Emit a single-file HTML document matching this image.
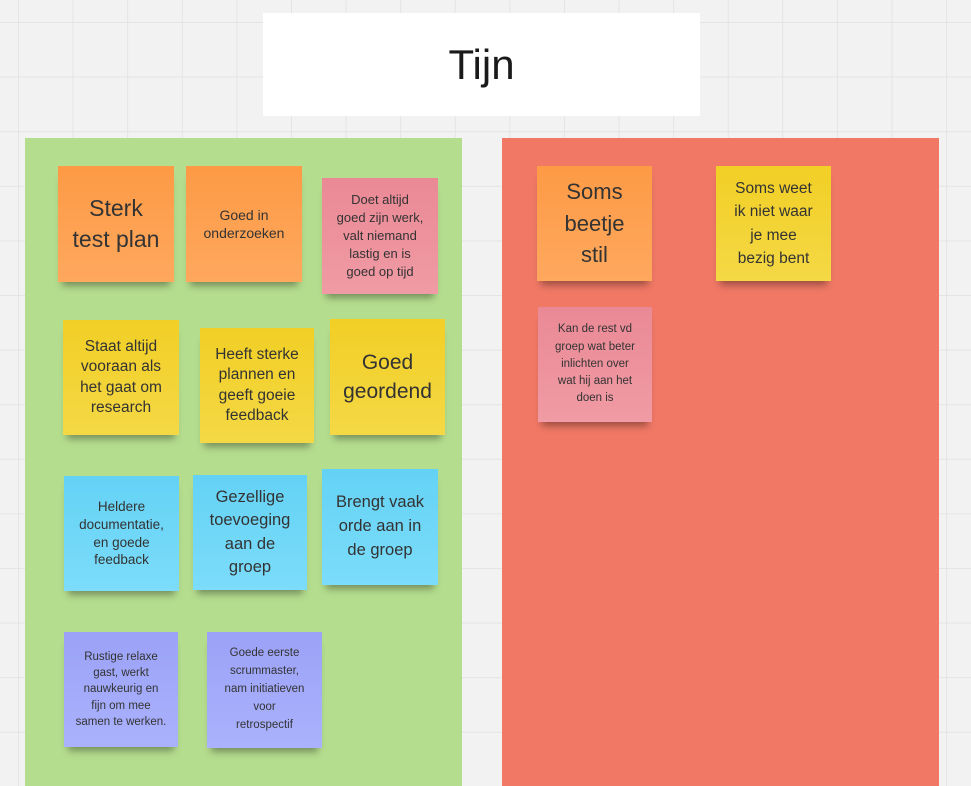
<!DOCTYPE html>
<html><head><meta charset="utf-8"><style>
html,body{margin:0;padding:0}
body{width:971px;height:786px;overflow:hidden;position:relative;background-color:#f2f2f2;
background-image:linear-gradient(to right,#e4e4e4 1px,transparent 1px),linear-gradient(to bottom,#e4e4e4 1px,transparent 1px);
background-size:54.6px 54.6px;background-position:18px 22px;font-family:"Liberation Sans",sans-serif}
.p{position:absolute}
.title{left:263px;top:13px;width:437px;height:103px;background:#fff;display:flex;align-items:center;justify-content:center;font-size:42px;color:#1a1a1a}
.g{left:25px;top:138px;width:437px;height:648px;background:#b5dd8e}
.r{left:502px;top:138px;width:437px;height:648px;background:#f07865}
.n{position:absolute;display:flex;align-items:center;justify-content:center;text-align:center;color:#333;box-shadow:0 8px 7px -4px rgba(0,0,0,.35);line-height:1.3;box-sizing:border-box;padding:4px}
.o{background:linear-gradient(#fd9a45,#fea85e)}
.pk{background:linear-gradient(#ea8995,#f09ba5)}
.y{background:linear-gradient(#f2cf25,#f4d845)}
.c{background:linear-gradient(#64d2f5,#7cdcfa)}
.v{background:linear-gradient(#9ba2f7,#aab2fd)}
</style></head><body>
<div class="p title">Tijn</div>
<div class="p g"></div>
<div class="p r"></div>

<div class="n o" style="left:58px;top:166px;width:116px;height:116px;font-size:23px;line-height:1.35">Sterk<br>test plan</div>
<div class="n o" style="left:186px;top:166px;width:116px;height:116px;font-size:14px">Goed in<br>onderzoeken</div>
<div class="n pk" style="left:322px;top:178px;width:116px;height:116px;font-size:13px;line-height:1.4">Doet altijd<br>goed zijn werk,<br>valt niemand<br>lastig en is<br>goed op tijd</div>
<div class="n y" style="left:63px;top:320px;width:116px;height:115px;font-size:15.5px">Staat altijd<br>vooraan als<br>het gaat om<br>research</div>
<div class="n y" style="left:200px;top:328px;width:114px;height:115px;font-size:15.5px">Heeft sterke<br>plannen en<br>geeft goeie<br>feedback</div>
<div class="n y" style="left:330px;top:319px;width:115px;height:116px;font-size:21px;line-height:1.4">Goed<br>geordend</div>
<div class="n c" style="left:64px;top:476px;width:115px;height:115px;font-size:13.5px">Heldere<br>documentatie,<br>en goede<br>feedback</div>
<div class="n c" style="left:193px;top:475px;width:114px;height:115px;font-size:16.5px;line-height:1.4">Gezellige<br>toevoeging<br>aan de<br>groep</div>
<div class="n c" style="left:322px;top:469px;width:116px;height:116px;font-size:16.5px;line-height:1.45">Brengt vaak<br>orde aan in<br>de groep</div>
<div class="n v" style="left:64px;top:632px;width:114px;height:115px;font-size:11.5px;line-height:1.4">Rustige relaxe<br>gast, werkt<br>nauwkeurig en<br>fijn om mee<br>samen te werken.</div>
<div class="n v" style="left:207px;top:632px;width:115px;height:116px;font-size:11.5px;line-height:1.55">Goede eerste<br>scrummaster,<br>nam initiatieven<br>voor<br>retrospectif</div>

<div class="n o" style="left:537px;top:166px;width:115px;height:115px;font-size:22px;line-height:1.45">Soms<br>beetje<br>stil</div>
<div class="n y" style="left:716px;top:166px;width:115px;height:115px;font-size:15.5px;line-height:1.5">Soms weet<br>ik niet waar<br>je mee<br>bezig bent</div>
<div class="n pk" style="left:538px;top:307px;width:114px;height:115px;font-size:11.5px;line-height:1.5">Kan de rest vd<br>groep wat beter<br>inlichten over<br>wat hij aan het<br>doen is</div>
</body></html>
